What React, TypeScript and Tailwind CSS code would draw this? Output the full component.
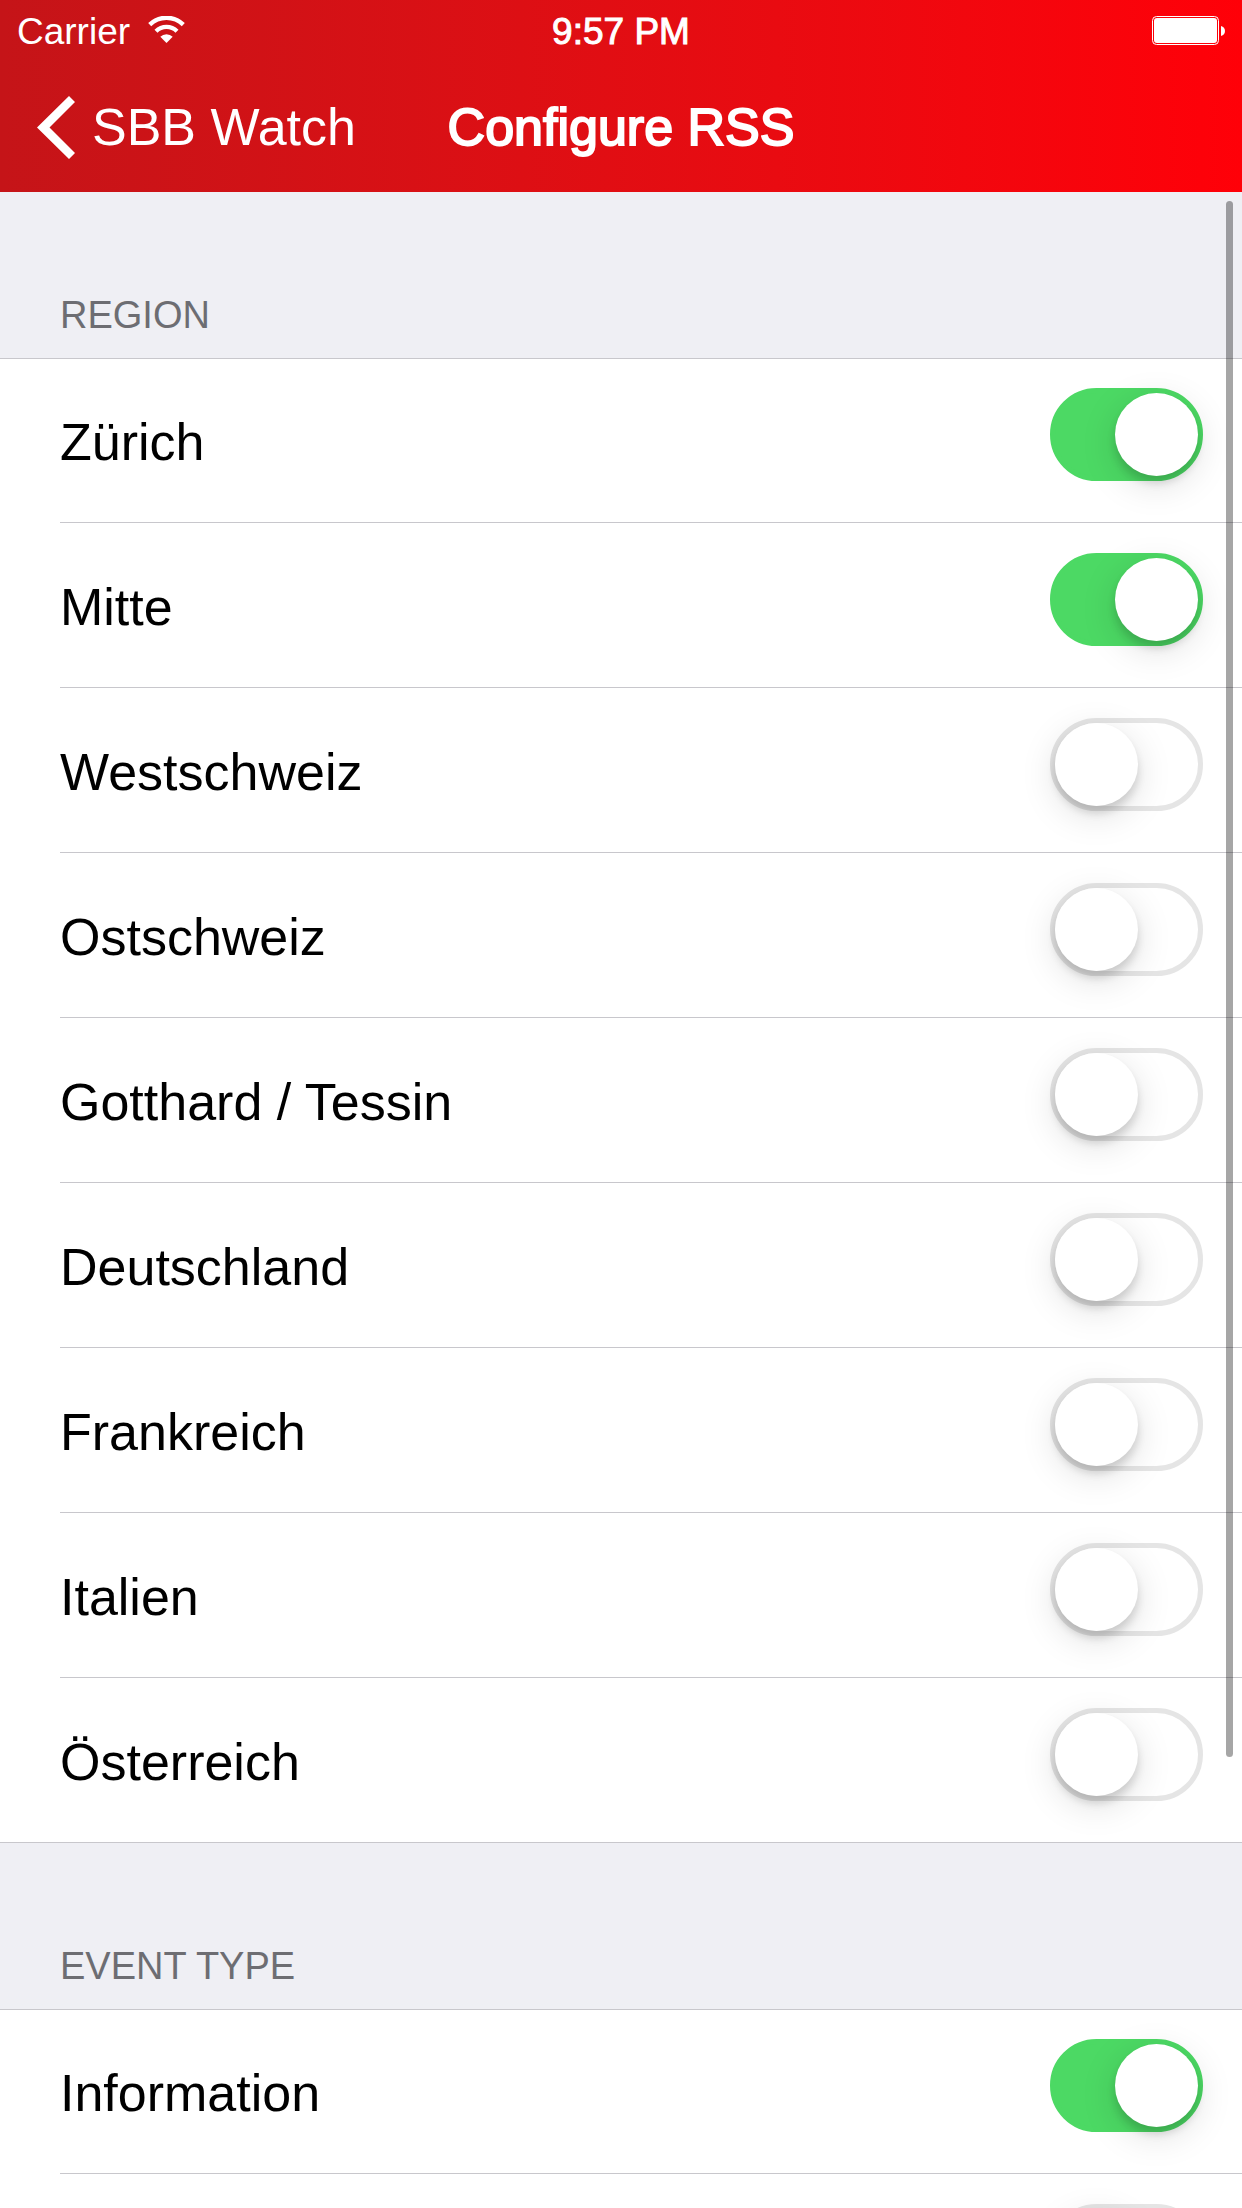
import { useId } from "react";

type Option = { label?: string; on?: boolean };
type Group = { title: string; options: Option[] };

const groups: Group[] = [
  {
    title: "REGION",
    options: [
      { label: "Zürich", on: true },
      { label: "Mitte", on: true },
      { label: "Westschweiz" },
      { label: "Ostschweiz" },
      { label: "Gotthard / Tessin" },
      { label: "Deutschland" },
      { label: "Frankreich" },
      { label: "Italien" },
      { label: "Österreich" },
    ],
  },
  {
    title: "EVENT TYPE",
    options: [{ label: "Information", on: true }, {}],
  },
];

function WifiIcon() {
  return (
    <svg viewBox="0 0 37 27" className="mt-4 h-[27px] w-[37px] self-start" aria-hidden="true">
      <path d="M1.700 8.600A24 24 0 0 1 35.300 8.600" fill="none" stroke="#fff" strokeWidth="4.300" />
      <path d="M8 15.200A15 15 0 0 1 29 15.200" fill="none" stroke="#fff" strokeWidth="4.300" />
      <path d="M18.500 27L12.300 20.800A8.800 8.800 0 0 1 24.700 20.800Z" fill="#fff" />
    </svg>
  );
}

function BatteryIcon() {
  return (
    <svg viewBox="0 0 73 29" className="mt-4 h-[29px] w-[73px] self-start" aria-hidden="true">
      <rect x="0.5" y="0.5" width="66" height="28" rx="4" fill="none" stroke="#fff" />
      <rect x="2" y="2" width="63" height="25" rx="3" fill="#fff" />
      <path d="M69 10C71.500 10.500 73 12.500 73 15S71.500 19.500 69 20Z" fill="#fff" />
    </svg>
  );
}

function Header() {
  return (
    <header className="shrink-0 bg-linear-to-r from-[#c51418] to-[#ff0008] text-white">
      <div className="grid h-16 grid-cols-[1fr_auto_1fr] items-center pr-[17px] pl-[17px] text-[37px] leading-[48px]">
        <div className="flex h-full items-center gap-[18px]">
          <span>Carrier</span>
          <WifiIcon />
        </div>
        <span className="[-webkit-text-stroke:1px_white]">9:57 PM</span>
        <div className="flex h-full justify-end">
          <BatteryIcon />
        </div>
      </div>
      <nav className="grid h-32 grid-cols-[1fr_auto_1fr] items-center pr-[37px] pb-0.5 pl-[37px] text-[52px] leading-[60px]">
        <button type="button" className="flex items-center gap-[17px] whitespace-nowrap">
          <svg viewBox="0 0 38 63" className="h-[63px] w-[38px]" aria-hidden="true">
            <path d="M32 0L38 6L12.500 31.500L38 57L32 63L0 31.500Z" fill="#fff" />
          </svg>
          SBB Watch
        </button>
        <h1 className="[-webkit-text-stroke:2px_white]">Configure RSS</h1>
      </nav>
    </header>
  );
}

function SwitchRow({ option, groupId, last }: { option: Option; groupId: string; last: boolean }) {
  const id = useId();
  return (
    <li className={last ? "border-b border-[#c8c7cc]" : "pl-[60px]"}>
      <div
        className={
          last
            ? "flex h-[164px] items-start justify-between pr-[39px] pl-[60px]"
            : "flex h-[165px] items-start justify-between border-b border-[#c8c7cc] pr-[39px]"
        }
      >
        {option.label ? (
          <label htmlFor={id} className="pt-[54px] text-[52px] leading-[60px] text-black">
            {option.label}
          </label>
        ) : (
          <span />
        )}
        <input
          id={id}
          type="checkbox"
          role="switch"
          defaultChecked={option.on}
          aria-labelledby={option.label ? undefined : groupId}
          className="mt-[30px] h-[93px] w-[153px] shrink-0 appearance-none rounded-full border-[5px] border-[#e5e5e5] bg-white before:block before:size-[83px] before:rounded-full before:bg-white before:shadow-[0_9px_36px_rgba(0,0,0,0.13),0_7px_9px_rgba(0,0,0,0.14)] before:content-[''] checked:border-[#4cd964] checked:bg-[#4cd964] checked:before:ml-[60px]"
        />
      </div>
    </li>
  );
}

function SwitchGroup({ group }: { group: Group }) {
  const id = useId();
  return (
    <section aria-labelledby={id}>
      <div className="flex h-[166px] items-end pb-[19px] pl-[60px]">
        <h2 id={id} className="text-[38px] leading-[48px] text-[#6d6d72]">
          {group.title}
        </h2>
      </div>
      <ul className="bg-white shadow-[inset_0_1px_0_#c8c7cc]">
        {group.options.map((option, i) => (
          <SwitchRow key={i} option={option} groupId={id} last={i === group.options.length - 1} />
        ))}
      </ul>
    </section>
  );
}

export default function App() {
  return (
    <div className="flex h-screen flex-col bg-[#efeff4] font-['Helvetica_Neue','Liberation_Sans',Arial,sans-serif]">
      <Header />
      <main className="relative min-h-0 flex-1">
        <div className="h-full overflow-y-auto [scrollbar-width:none]">
          {groups.map((group) => (
            <SwitchGroup key={group.title} group={group} />
          ))}
        </div>
        <div className="pointer-events-none absolute top-[9px] right-[9px] h-[77.2%] w-[7px] rounded-full bg-black/35" />
      </main>
    </div>
  );
}
